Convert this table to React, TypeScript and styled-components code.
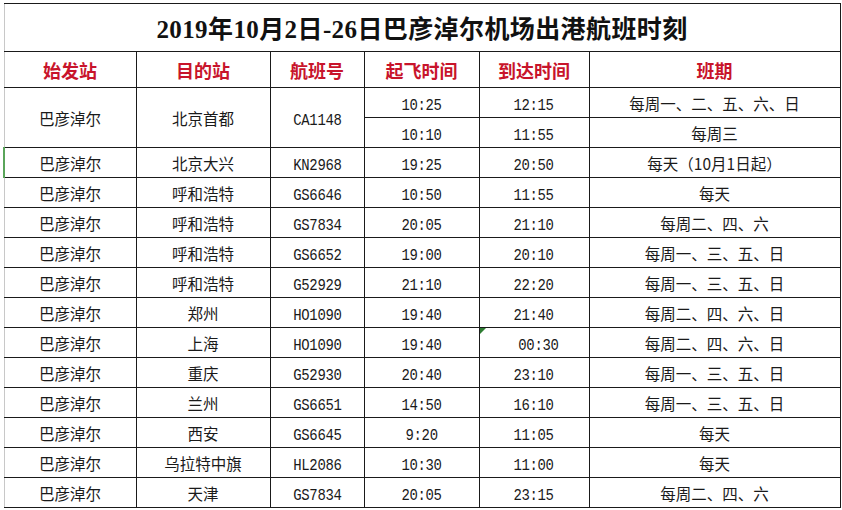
import React from "react";
import styled, { createGlobalStyle } from "styled-components";

const GlobalStyle = createGlobalStyle`
  html, body {
    margin: 0;
    padding: 0;
    background: #ffffff;
  }
  body {
    font-family: "Liberation Sans", "Noto Sans CJK SC", sans-serif;
  }
`;

const Page = styled.div`
  width: 842px;
  height: 510px;
  overflow: hidden;
  padding: 3px 0 0 3px;
  box-sizing: border-box;
`;

const Table = styled.table`
  border-collapse: collapse;
  table-layout: fixed;
  width: 836px;
`;

const TitleRow = styled.tr`
  height: 48px;
`;

const TitleCell = styled.td`
  border: 1px solid #1a1a1a;
  border-left-color: #c8c8c8;
  text-align: center;
  font-family: "Liberation Serif", "Noto Sans CJK SC", serif;
  font-weight: 700;
  font-size: 25px;
  letter-spacing: 0.4px;
  color: #111;
  padding: 0 0 2px;
`;

const HeaderRow = styled.tr`
  height: 36px;
`;

const HeaderCell = styled.td`
  border: 1px solid #1a1a1a;
  text-align: center;
  font-family: "Liberation Serif", "Noto Sans CJK SC", serif;
  font-weight: 700;
  font-size: 18px;
  color: #c8142b;
  padding: 0;
  &:first-child {
    border-left-color: #c8c8c8;
  }
`;

const Row = styled.tr`
  height: 30px;
`;

const Cell = styled.td<{ $marked?: boolean; $flag?: boolean }>`
  border: 1px solid #1a1a1a;
  text-align: center;
  padding: 0;
  font-family: "Noto Sans CJK SC", "Liberation Sans", sans-serif;
  font-size: 15.5px;
  color: #1a1a1a;
  white-space: pre;
  &:first-child {
    border-left: ${p => (p.$marked ? "2px solid #5aa55a" : "1px solid #c8c8c8")};
  }
  /* excel's little green error marker */
  ${p =>
    p.$flag &&
    `
    position: relative;
    &::before {
      content: "";
      position: absolute;
      left: 0;
      top: 0;
      border-top: 6px solid #2e7d32;
      border-right: 6px solid transparent;
    }
  `}
`;

/* SimSun-like narrow, tall digits */
const Mono = styled.span`
  display: inline-block;
  font-family: "Liberation Mono", monospace;
  font-size: 17px;
  letter-spacing: -0.4px;
  line-height: 1;
  padding-top: 2px;
  transform: scaleX(0.82);
`;

type Flight = {
  to: string;
  no: string;
  dep: string;
  arr: string;
  days: string;
  marked?: boolean;
  flag?: boolean;
};

const flights: Flight[] = [
  { to: "北京大兴", no: "KN2968", dep: "19:25", arr: "20:50", days: "每天（10月1日起）", marked: true },
  { to: "呼和浩特", no: "GS6646", dep: "10:50", arr: "11:55", days: "每天" },
  { to: "呼和浩特", no: "GS7834", dep: "20:05", arr: "21:10", days: "每周二、四、六" },
  { to: "呼和浩特", no: "GS6652", dep: "19:00", arr: "20:10", days: "每周一、三、五、日" },
  { to: "呼和浩特", no: "G52929", dep: "21:10", arr: "22:20", days: "每周一、三、五、日" },
  { to: "郑州", no: "HO1090", dep: "19:40", arr: "21:40", days: "每周二、四、六、日" },
  { to: "上海", no: "HO1090", dep: "19:40", arr: " 00:30", days: "每周二、四、六、日", flag: true },
  { to: "重庆", no: "G52930", dep: "20:40", arr: "23:10", days: "每周一、三、五、日" },
  { to: "兰州", no: "GS6651", dep: "14:50", arr: "16:10", days: "每周一、三、五、日" },
  { to: "西安", no: "GS6645", dep: "9:20", arr: "11:05", days: "每天" },
  { to: "乌拉特中旗", no: "HL2086", dep: "10:30", arr: "11:00", days: "每天" },
  { to: "天津", no: "GS7834", dep: "20:05", arr: "23:15", days: "每周二、四、六" },
];

const headers = ["始发站", "目的站", "航班号", "起飞时间", "到达时间", "班期"];
const widths = [132, 134, 94, 115, 110, 251];

export default function App() {
  return (
    <Page>
      <GlobalStyle />
      <Table>
        <colgroup>
          {widths.map((w, i) => (
            <col key={i} style={{ width: w }} />
          ))}
        </colgroup>
        <tbody>
          <TitleRow>
            <TitleCell colSpan={6}>2019年10月2日-26日巴彦淖尔机场出港航班时刻</TitleCell>
          </TitleRow>
          <HeaderRow>
            {headers.map(h => (
              <HeaderCell key={h}>{h}</HeaderCell>
            ))}
          </HeaderRow>
          <Row>
            <Cell rowSpan={2}>巴彦淖尔</Cell>
            <Cell rowSpan={2}>北京首都</Cell>
            <Cell rowSpan={2}>
              <Mono>CA1148</Mono>
            </Cell>
            <Cell>
              <Mono>10:25</Mono>
            </Cell>
            <Cell>
              <Mono>12:15</Mono>
            </Cell>
            <Cell>每周一、二、五、六、日</Cell>
          </Row>
          <Row>
            <Cell>
              <Mono>10:10</Mono>
            </Cell>
            <Cell>
              <Mono>11:55</Mono>
            </Cell>
            <Cell>每周三</Cell>
          </Row>
          {flights.map((f, i) => (
            <Row key={f.no + i}>
              <Cell $marked={f.marked}>巴彦淖尔</Cell>
              <Cell>{f.to}</Cell>
              <Cell>
                <Mono>{f.no}</Mono>
              </Cell>
              <Cell>
                <Mono>{f.dep}</Mono>
              </Cell>
              <Cell $flag={f.flag}>
                <Mono>{f.arr}</Mono>
              </Cell>
              <Cell>{f.days}</Cell>
            </Row>
          ))}
        </tbody>
      </Table>
    </Page>
  );
}
